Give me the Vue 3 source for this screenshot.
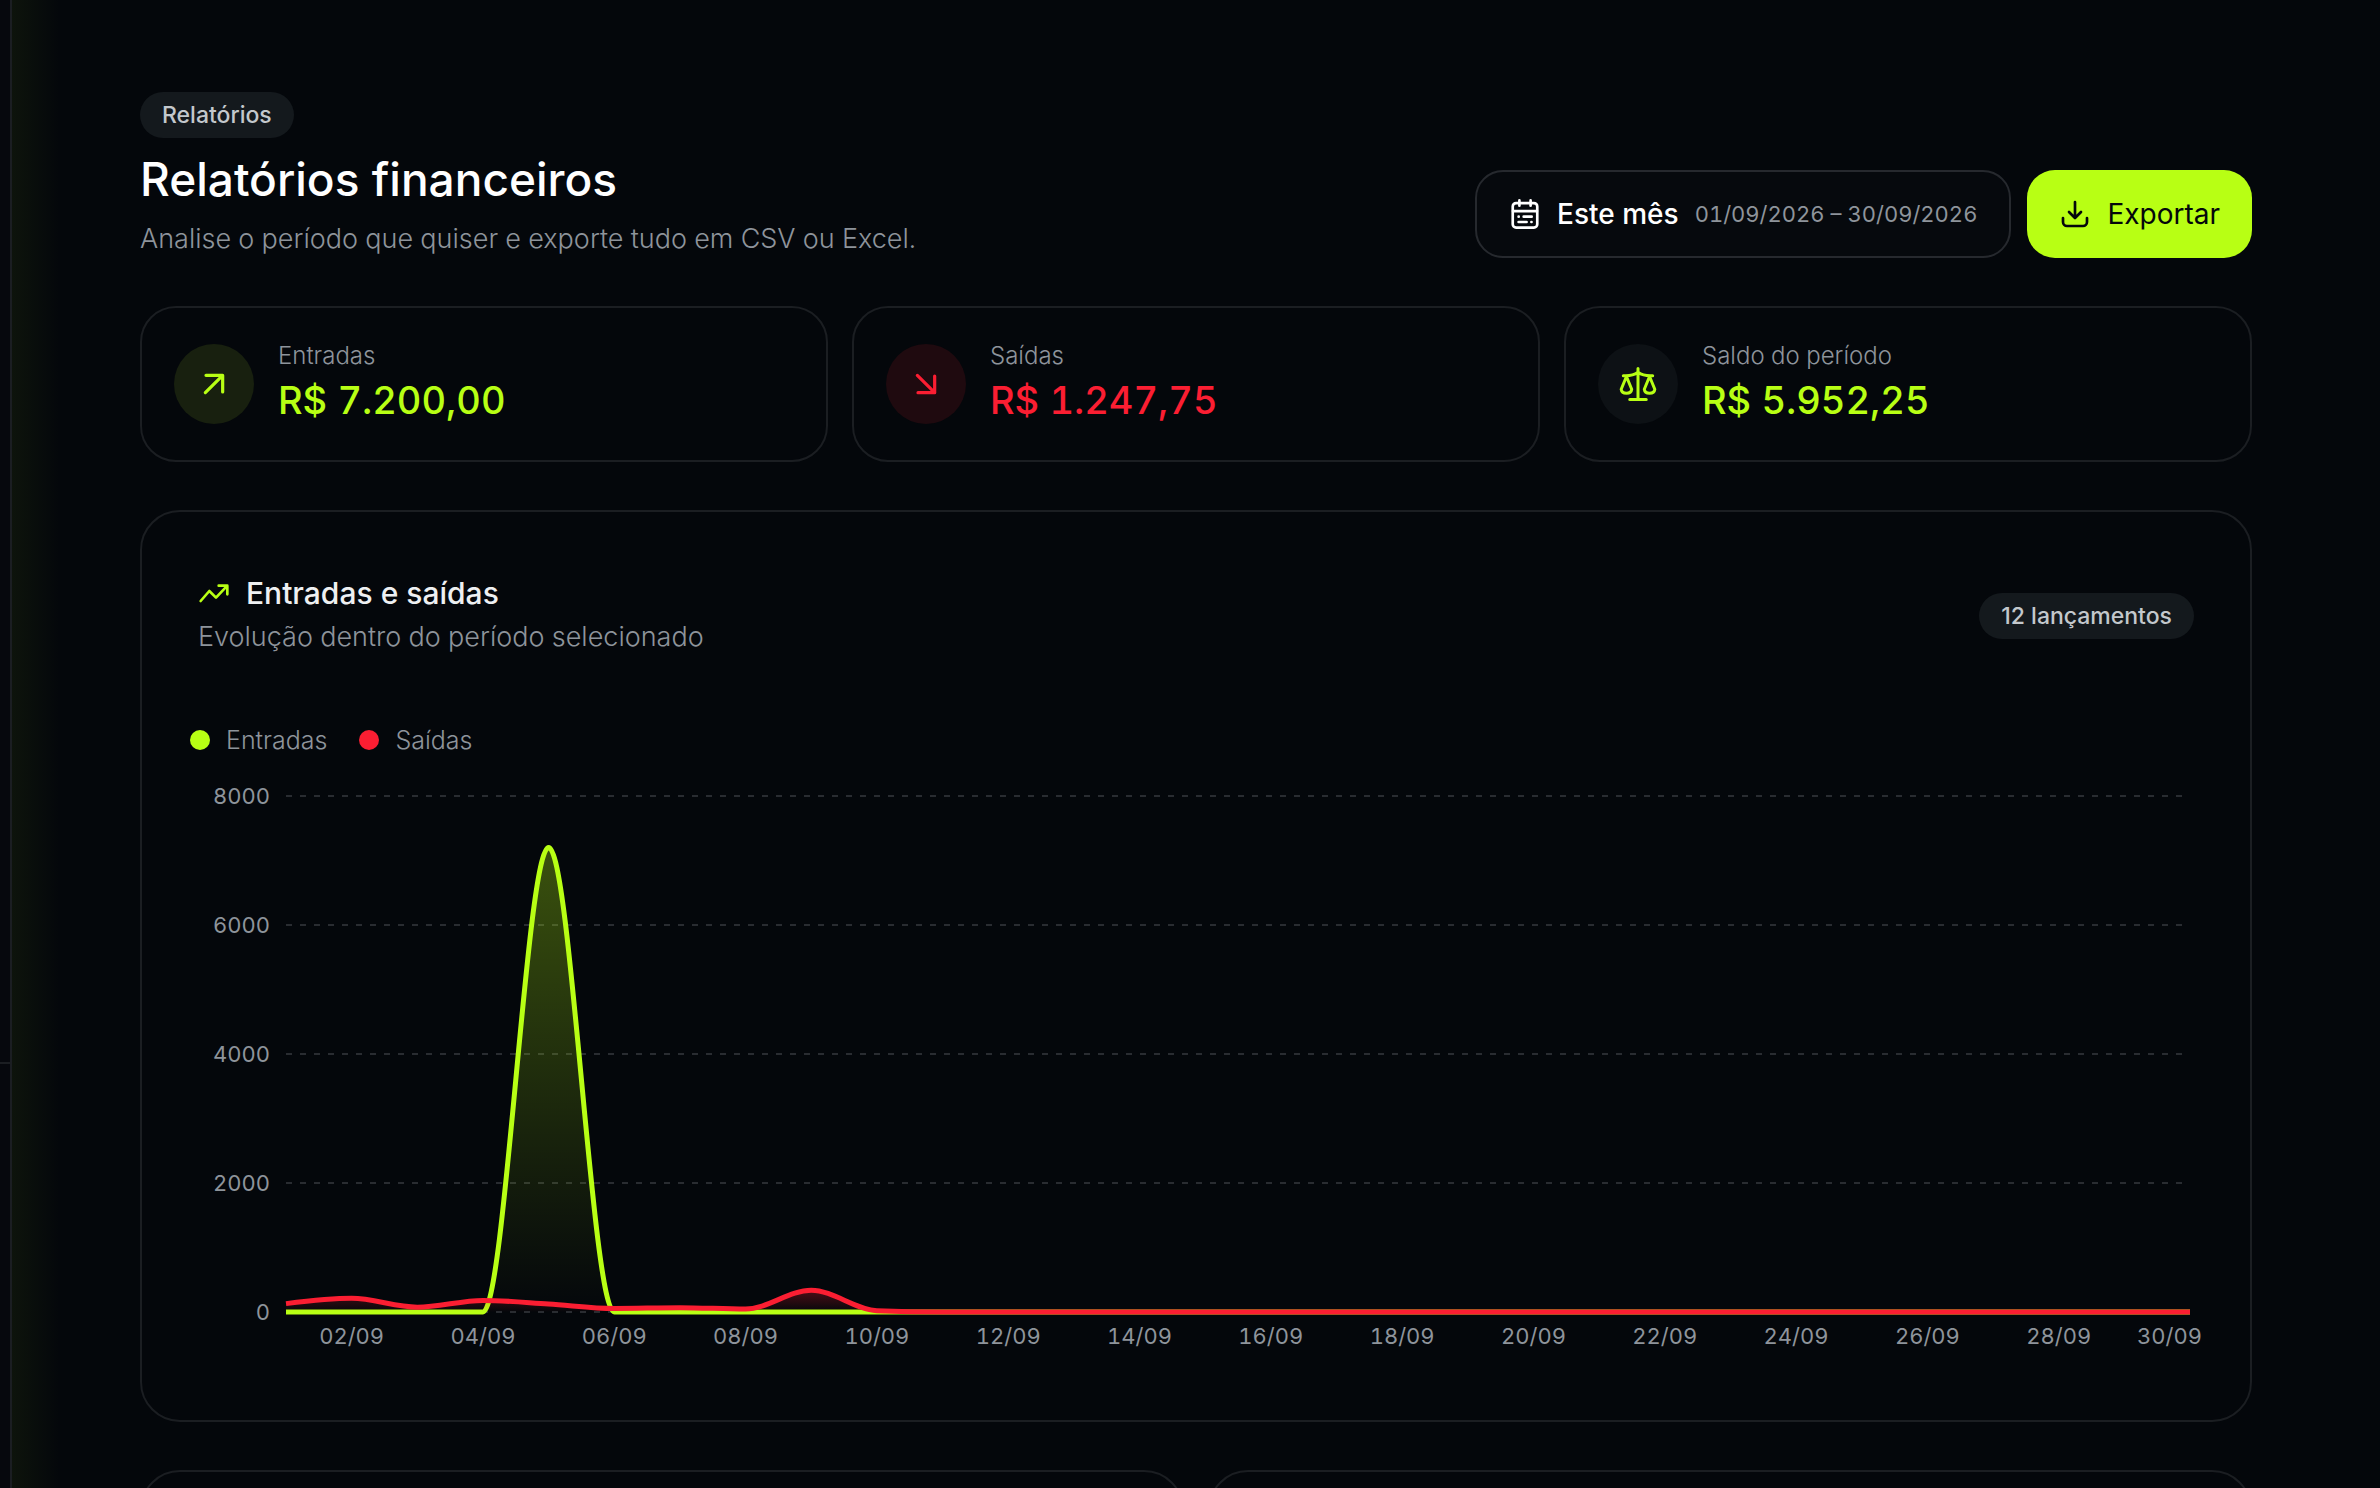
<script setup>
import { ref, computed, onMounted, onBeforeUnmount } from "vue";

const summary = [
  { id: "in", label: "Entradas", value: "R$ 7.200,00" },
  { id: "out", label: "Saídas", value: "R$ 1.247,75" },
  { id: "balance", label: "Saldo do período", value: "R$ 5.952,25" },
];

const DAYS = 30;
const MAX_VALUE = 8000;
const CHART_HEIGHT = 600;
const plot = { left: 96, right: 12, top: 24, bottom: 540 };

const income = Array(DAYS).fill(0);
income[4] = 7200;

const expenses = Array(DAYS).fill(0);
[130, 212, 75, 180, 124, 55, 67, 46, 338, 20.75].forEach((value, index) => {
  expenses[index] = value;
});

const chart = ref(null);
const chartWidth = ref(2012);

const handleResize = () => {
  if (chart.value) {
    chartWidth.value = chart.value.clientWidth;
  }
};

const plotRight = computed(() => chartWidth.value - plot.right);

const xAt = (index) =>
  plot.left + ((plotRight.value - plot.left) / (DAYS - 1)) * index;
const yAt = (value) =>
  plot.bottom - ((plot.bottom - plot.top) / MAX_VALUE) * value;

const yTicks = [0, 2000, 4000, 6000, 8000];

const xTicks = computed(() => {
  const ticks = [];
  for (let day = 2; day <= DAYS; day += 2) {
    const isLast = day === DAYS;
    ticks.push({
      label: String(day).padStart(2, "0") + "/09",
      x: isLast ? chartWidth.value : xAt(day - 1),
      anchor: isLast ? "end" : "middle",
    });
  }
  return ticks;
});

// monotone cubic, so the curve never dips below zero
const linePath = (values) => {
  const points = values.map((value, index) => [xAt(index), yAt(value)]);
  const step = points[1][0] - points[0][0];
  const slopes = [];
  for (let i = 0; i < points.length - 1; i++) {
    slopes.push((points[i + 1][1] - points[i][1]) / step);
  }
  const tangents = points.map((_, i) => {
    if (i === 0 || i === points.length - 1) return null;
    const s0 = slopes[i - 1];
    const s1 = slopes[i];
    if (s0 * s1 <= 0) return 0;
    return (
      Math.sign(s0) *
      2 *
      Math.min(Math.abs(s0), Math.abs(s1), Math.abs(s0 + s1) / 4)
    );
  });
  const last = points.length - 1;
  tangents[0] = (3 * slopes[0] - tangents[1]) / 2;
  tangents[last] = (3 * slopes[last - 1] - tangents[last - 1]) / 2;

  let path = `M${points[0][0]},${points[0][1]}`;
  for (let i = 0; i < last; i++) {
    const [x0, y0] = points[i];
    const [x1, y1] = points[i + 1];
    path += `C${x0 + step / 3},${y0 + (tangents[i] * step) / 3} ${
      x1 - step / 3
    },${y1 - (tangents[i + 1] * step) / 3} ${x1},${y1}`;
  }
  return path;
};

const areaPath = (values) =>
  `${linePath(values)}L${plotRight.value},${plot.bottom}L${plot.left},${
    plot.bottom
  }Z`;

onMounted(() => {
  handleResize();
  window.addEventListener("resize", handleResize);
});
onBeforeUnmount(() => {
  window.removeEventListener("resize", handleResize);
});
</script>

<template>
  <div class="shell">
    <aside class="sidebar">
      <div class="sidebar__footer"></div>
    </aside>

    <main class="page">
      <header class="page__header">
        <div class="page__heading">
          <span class="badge">Relatórios</span>
          <h1 class="page__title">Relatórios financeiros</h1>
          <p class="page__subtitle">
            Analise o período que quiser e exporte tudo em CSV ou Excel.
          </p>
        </div>
        <div class="page__actions">
          <button type="button" class="button button--outline">
            <svg class="icon" viewBox="0 0 24 24" aria-hidden="true">
              <path d="M7.8 1.800v4M16.2 1.800v4" />
              <rect x="2.8" y="3.800" width="18.4" height="18.400" rx="2.5" />
              <path d="M3 9.8h18M7.2 14h.1M11 14h6M7.2 18h6M16.8 18h.1" />
            </svg>
            <span>Este mês</span>
            <span class="button__range">01/09/2026 – 30/09/2026</span>
          </button>
          <button type="button" class="button button--primary">
            <svg class="icon" viewBox="0 0 24 24" aria-hidden="true">
              <path d="M12 3v11.5M7.5 10.5L12 15l4.5-4.5" />
              <path d="M3 15v3a3 3 0 0 0 3 3h12a3 3 0 0 0 3-3v-3" />
            </svg>
            <span>Exportar</span>
          </button>
        </div>
      </header>

      <section class="summary">
        <article
          v-for="item in summary"
          :key="item.id"
          class="summary__card"
          :class="'summary__card--' + item.id"
        >
          <div class="summary__icon">
            <svg
              v-if="item.id === 'in'"
              class="icon icon--arrow"
              viewBox="0 0 24 24"
              aria-hidden="true"
            >
              <path d="M5.500 18.500L18.500 5.500M6 5.500h12.500V18" />
            </svg>
            <svg
              v-else-if="item.id === 'out'"
              class="icon icon--arrow"
              viewBox="0 0 24 24"
              aria-hidden="true"
            >
              <path d="M5.500 5.500l13 13M18.500 6v12.500H6" />
            </svg>
            <svg v-else class="icon icon--scale" viewBox="0 0 24 24" aria-hidden="true">
              <path d="M12 1.700v20.600M6.500 22.300h11M2.200 6.500h1.600C7 6.500 9.700 5.800 12 4.200c2.300 1.600 5 2.300 8.200 2.300h1.600" />
              <path d="M4.300 7l-3.500 8.500c.2 1.700 1.400 2.600 3.500 2.600s3.300-.9 3.500-2.600z" />
              <path d="M19.700 7l-3.500 8.500c.2 1.700 1.400 2.600 3.500 2.600s3.300-.9 3.500-2.600z" />
            </svg>
          </div>
          <div>
            <p class="summary__label">{{ item.label }}</p>
            <p class="summary__value">{{ item.value }}</p>
          </div>
        </article>
      </section>

      <section class="panel">
        <div class="panel__header">
          <div>
            <h2 class="panel__title">
              <svg class="icon icon--accent" viewBox="0 0 24 24" aria-hidden="true">
                <path d="M2 18l6.5-7.5 5 5L22 6.500M15.500 6.500H22V13" />
              </svg>
              Entradas e saídas
            </h2>
            <p class="panel__subtitle">Evolução dentro do período selecionado</p>
          </div>
          <span class="badge">12 lançamentos</span>
        </div>

        <ul class="legend">
          <li class="legend__item legend__item--in">Entradas</li>
          <li class="legend__item legend__item--out">Saídas</li>
        </ul>

        <div ref="chart" class="chart">
          <svg
            class="chart__svg"
            :width="chartWidth"
            :height="CHART_HEIGHT"
            role="img"
            aria-label="Entradas e saídas"
          >
            <defs>
              <linearGradient id="fillIn" x1="0" y1="0" x2="0" y2="1">
                <stop offset="0" stop-color="#b8ff14" stop-opacity="0.3" />
                <stop offset="1" stop-color="#b8ff14" stop-opacity="0" />
              </linearGradient>
              <linearGradient id="fillOut" x1="0" y1="0" x2="0" y2="1">
                <stop offset="0" stop-color="#fb1e32" stop-opacity="0.3" />
                <stop offset="1" stop-color="#fb1e32" stop-opacity="0" />
              </linearGradient>
            </defs>

            <line
              v-for="tick in yTicks"
              :key="tick"
              class="chart__grid"
              :x1="plot.left"
              :x2="plotRight"
              :y1="yAt(tick)"
              :y2="yAt(tick)"
            />

            <path :d="areaPath(income)" fill="url(#fillIn)" />
            <path :d="linePath(income)" class="chart__line chart__line--in" />
            <path :d="areaPath(expenses)" fill="url(#fillOut)" />
            <path :d="linePath(expenses)" class="chart__line chart__line--out" />

            <text
              v-for="tick in yTicks"
              :key="'y' + tick"
              class="chart__label"
              :x="plot.left - 16"
              :y="yAt(tick) + 8"
              text-anchor="end"
            >
              {{ tick }}
            </text>
            <text
              v-for="tick in xTicks"
              :key="tick.label"
              class="chart__label"
              :x="tick.x"
              :y="plot.bottom + 32"
              :text-anchor="tick.anchor"
            >
              {{ tick.label }}
            </text>
          </svg>
        </div>
      </section>

      <section class="columns">
        <div class="panel"></div>
        <div class="panel"></div>
      </section>
    </main>
  </div>
</template>

<style>
body {
  margin: 0;
  background: #04070b;
}

h1,
h2,
p,
ul {
  margin: 0;
  padding: 0;
}
</style>

<style scoped>
.shell {
  display: flex;
  height: 100vh;
  overflow: hidden;
  background: #04070b;
  color: #fff;
  font-family: Inter, "Liberation Sans", sans-serif;
  font-variant-numeric: tabular-nums;
}

.sidebar {
  display: flex;
  flex: none;
  flex-direction: column;
  justify-content: flex-end;
  width: 10px;
  border-right: 2px solid #1b1e22;
  background: #06080d;
}

.sidebar__footer {
  height: 424px;
  border-top: 2px solid #1b1e22;
}

.page {
  display: flex;
  flex: 1;
  flex-direction: column;
  gap: 48px;
  min-width: 0;
  padding: 92px 128px 0;
  background: linear-gradient(
    to right,
    rgba(184, 255, 20, 0.05),
    rgba(184, 255, 20, 0) 48px
  );
}

.page__header {
  display: flex;
  align-items: flex-end;
  justify-content: space-between;
}

.page__heading {
  display: flex;
  flex-direction: column;
  align-items: flex-start;
  gap: 12px;
}

.page__title {
  font-size: 46px;
  font-weight: 500;
  line-height: 58px;
}

.page__subtitle {
  color: #8e949b;
  font-size: 27px;
  font-weight: 300;
  line-height: 38px;
}

.page__actions {
  display: flex;
  gap: 16px;
}

.badge {
  padding: 0 22px;
  border-radius: 24px;
  background: #14191d;
  color: #c3c8cc;
  font-size: 23px;
  font-variant-numeric: normal;
  font-weight: 500;
  line-height: 46px;
  white-space: nowrap;
}

.button {
  display: flex;
  align-items: center;
  gap: 16px;
  box-sizing: border-box;
  height: 88px;
  padding: 0 32px;
  border: 0;
  border-radius: 28px;
  font-family: inherit;
  font-size: 28px;
  font-variant-numeric: inherit;
  cursor: pointer;
}

.button--outline {
  border: 2px solid #26292e;
  background: #06090d;
  color: #fff;
  font-weight: 500;
}

.button--primary {
  background: #b8ff14;
  color: #04070b;
}

.button__range {
  color: #8e949b;
  font-size: 22px;
  font-weight: 400;
}

.icon {
  flex: none;
  width: 32px;
  height: 32px;
  overflow: visible;
  fill: none;
  stroke: currentColor;
  stroke-width: 2;
  stroke-linecap: round;
  stroke-linejoin: round;
}

.icon--accent {
  color: #b8ff14;
}

.icon--arrow {
  stroke-width: 2.4;
}

.icon--scale {
  width: 36px;
  height: 36px;
}

.summary {
  display: grid;
  grid-template-columns: repeat(3, 1fr);
  gap: 24px;
}

.summary__card {
  display: flex;
  align-items: center;
  gap: 24px;
  padding: 32px;
  border: 2px solid #1b1e22;
  border-radius: 36px;
}

.summary__icon {
  display: flex;
  align-items: center;
  justify-content: center;
  width: 80px;
  height: 80px;
  border-radius: 50%;
}

.summary__card--in {
  color: #b8ff14;
}
.summary__card--in .summary__icon {
  background: #18200f;
}

.summary__card--out {
  color: #fb1e32;
}
.summary__card--out .summary__icon {
  background: #1f0a0f;
}

.summary__card--balance {
  color: #b8ff14;
}
.summary__card--balance .summary__icon {
  background: #0d1115;
}

.summary__label {
  color: #8e949b;
  font-size: 24px;
  font-weight: 300;
  line-height: 32px;
}

.summary__value {
  font-size: 38px;
  font-weight: 500;
  line-height: 56px;
}

.panel {
  padding: 60px 48px 48px;
  border: 2px solid #1b1e22;
  border-radius: 40px;
}

.panel__header {
  display: flex;
  align-items: center;
  justify-content: space-between;
  padding: 0 8px;
}

.panel__title {
  display: flex;
  align-items: center;
  gap: 16px;
  color: #eef0f2;
  font-size: 30px;
  font-weight: 500;
  line-height: 42px;
}

.panel__subtitle {
  color: #8e949b;
  font-size: 27px;
  font-weight: 300;
  line-height: 46px;
}

.legend {
  display: flex;
  gap: 32px;
  margin: 64px 0 16px;
  list-style: none;
}

.legend__item {
  display: flex;
  align-items: center;
  gap: 16px;
  color: #8e949b;
  font-size: 25px;
  font-weight: 300;
  line-height: 32px;
}

.legend__item::before {
  width: 20px;
  height: 20px;
  border-radius: 50%;
  content: "";
}

.legend__item--in::before {
  background: #b8ff14;
}

.legend__item--out::before {
  background: #fb1e32;
}

.chart {
  overflow: hidden;
}

.chart__svg {
  display: block;
}

.chart__grid {
  stroke: #292c31;
  stroke-width: 2;
  stroke-dasharray: 6 8;
}

.chart__line {
  fill: none;
  stroke-width: 5;
}

.chart__line--in {
  stroke: #b8ff14;
}

.chart__line--out {
  stroke: #fb1e32;
}

.chart__label {
  fill: #8e949b;
  font-size: 22px;
  font-weight: 400;
}

.columns {
  display: grid;
  grid-template-columns: 1fr 1fr;
  gap: 24px;
}
</style>
